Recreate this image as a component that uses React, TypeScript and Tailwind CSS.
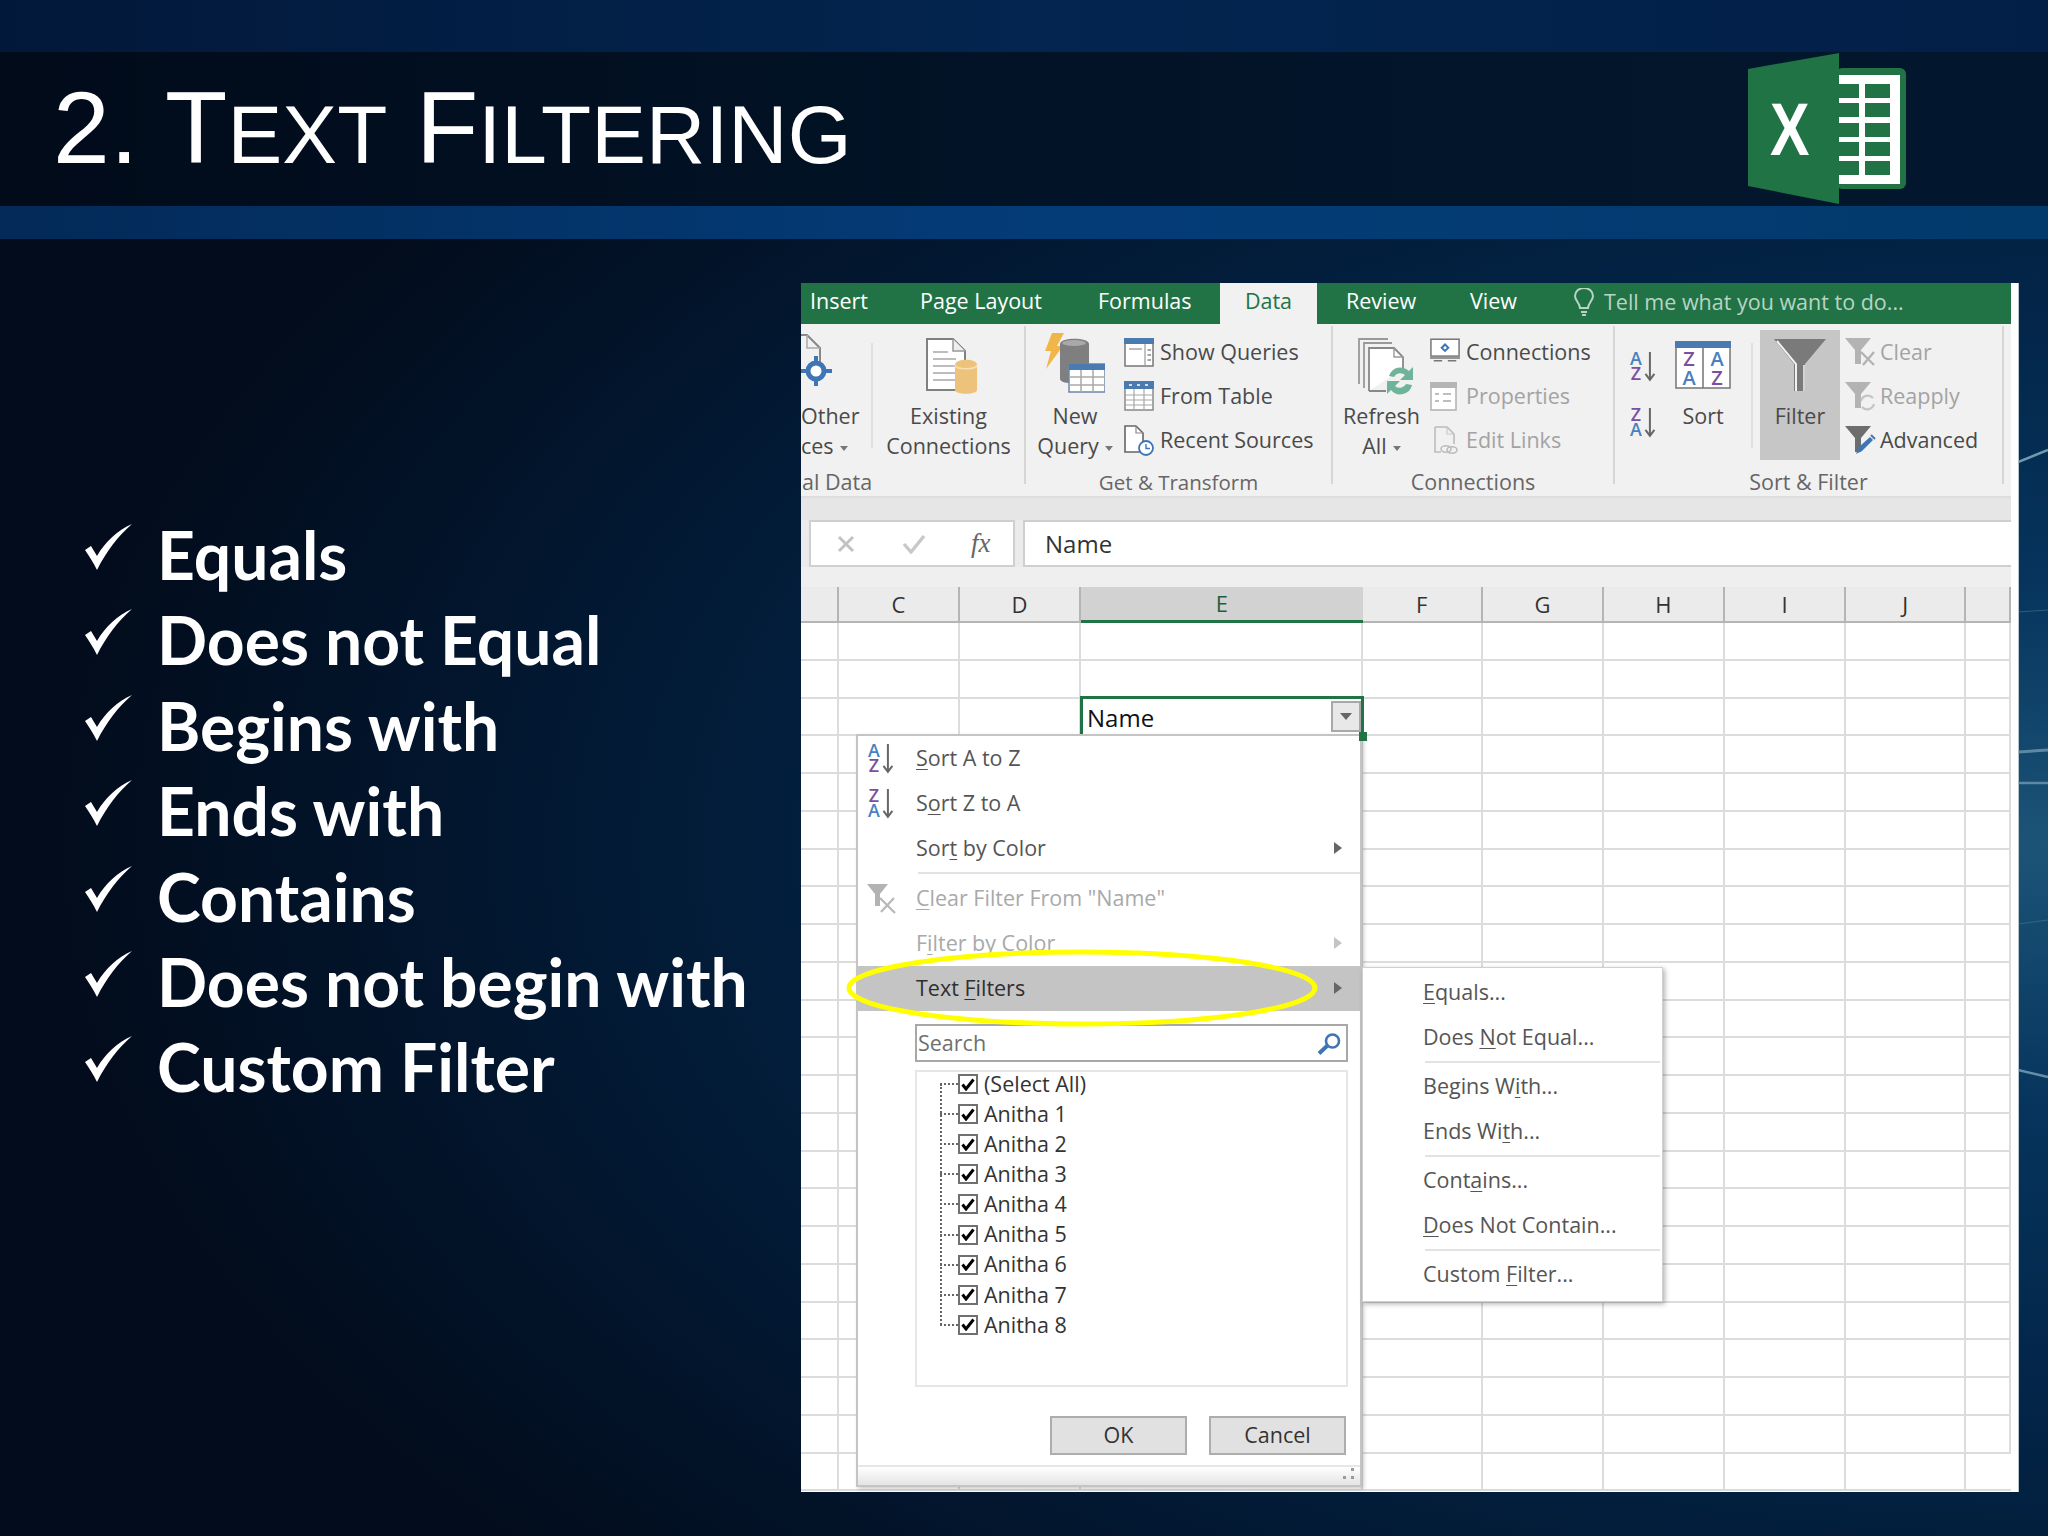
import type { ReactNode } from "react";

const ui = "font-['Open_Sans',sans-serif]";

const bullets = ["Equals", "Does not Equal", "Begins with", "Ends with", "Contains", "Does not begin with", "Custom Filter"];
const colLabels = ["", "C", "D", "E", "F", "G", "H", "I", "J", ""];
const tree = ["(Select All)", "Anitha 1", "Anitha 2", "Anitha 3", "Anitha 4", "Anitha 5", "Anitha 6", "Anitha 7", "Anitha 8"];
const gridCols = "grid grid-cols-[38px_121px_121px_281.6px_120.4px_121px_121px_121px_120.5px_44.5px]";

function Tick() {
  return (
    <svg width="47" height="46" viewBox="0 0 47 46" className="shrink-0">
      <path d="M0 26 L6 22 L12 32 C20 18 33 6 47 0 C33 12 21 28 12 46 C8 38 4 32 0 26Z" fill="#fff" />
    </svg>
  );
}

function ExcelLogo() {
  return (
    <svg width="160" height="152" viewBox="0 0 160 152">
      <rect x="88" y="15" width="70" height="121" rx="6" fill="#217346" />
      <rect x="90" y="22" width="62" height="109" fill="#fff" />
      <g fill="#217346">
        {[31, 50, 70, 89, 108].map((y) => (
          <g key={y}>
            <rect x="90" y={y} width="21" height="14" />
            <rect x="117" y={y} width="25" height="14" />
          </g>
        ))}
      </g>
      <path d="M0 16 L91 0 V151 L0 133Z" fill="#1f7345" />
      <text x="0" y="102" transform="translate(22 0) scale(0.8 1)" fontFamily="Liberation Sans" fontWeight="700" fontSize="74" fill="#fff">X</text>
    </svg>
  );
}

function SortAZ({ flip, size = 34 }: { flip?: boolean; size?: number }) {
  const top = flip ? ["Z", "#7a4fa3"] : ["A", "#4a7fc0"];
  const bottom = flip ? ["A", "#4a7fc0"] : ["Z", "#7a4fa3"];
  return (
    <svg width={size * 0.82} height={size} viewBox="0 0 28 34">
      <text x="7" y="15" textAnchor="middle" fontFamily="Open Sans" fontWeight="600" fontSize="18" fill={top[1]}>{top[0]}</text>
      <text x="7" y="30" textAnchor="middle" fontFamily="Open Sans" fontWeight="600" fontSize="18" fill={bottom[1]}>{bottom[0]}</text>
      <path d="M21 2 V29 M16.5 24 L21 30 L25.5 24" fill="none" stroke="#666" strokeWidth="2" />
    </svg>
  );
}

function OtherIcon() {
  return (
    <svg width="32" height="62" viewBox="0 0 32 62">
      <path d="M0 2 H6 L19 15 V30" fill="none" stroke="#888" strokeWidth="2" />
      <path d="M6 2 V15 H19" fill="none" stroke="#aaa" strokeWidth="1.5" />
      <circle cx="15" cy="38" r="8" fill="#fff" stroke="#3f75b5" strokeWidth="5" />
      <path d="M15 23 V30 M15 46 V53 M0 38 H7 M23 38 H31" stroke="#3f75b5" strokeWidth="4" />
    </svg>
  );
}

function ExistingIcon() {
  return (
    <svg width="52" height="56" viewBox="0 0 52 56" className="ml-[6px] mt-[5px]">
      <path d="M1 1 H27 L39 13 V52 H1Z" fill="#fff" stroke="#808080" strokeWidth="2" />
      <path d="M27 1 V13 H39" fill="#eee" stroke="#999" strokeWidth="1.5" />
      <path d="M7 14 H22 M7 21 H30 M7 28 H30 M7 35 H30 M7 42 H30" stroke="#bdbdbd" strokeWidth="1.8" />
      <path d="M29 27 C29 20 51 20 51 27 V52 C51 57 29 57 29 52Z" fill="#edc27a" />
      <path d="M29 27 C29 32 51 32 51 27" fill="none" stroke="#f7dfb3" strokeWidth="1.5" />
    </svg>
  );
}

function NewQueryIcon() {
  return (
    <svg width="60" height="60" viewBox="0 0 60 60">
      <path d="M7 0 H19 L12 13 H18 L1 36 L6 18 H0Z" fill="#f0b64a" />
      <path d="M15 11 C15 4 44 4 44 11 V46 C44 52 15 52 15 46Z" fill="#7f7f7f" />
      <ellipse cx="29" cy="10" rx="12" ry="3" fill="#a9a9a9" />
      <rect x="24" y="31" width="36" height="28" fill="#fff" stroke="#6c86a6" strokeWidth="1.5" />
      <rect x="24" y="31" width="36" height="6" fill="#4a7ab0" />
      <path d="M36 37 V59 M48 37 V59 M24 44 H60 M24 52 H60" stroke="#a9a9a9" strokeWidth="1.5" />
    </svg>
  );
}

function ShowQueriesIcon() {
  return (
    <svg width="30" height="29" viewBox="0 0 30 29">
      <rect x="1" y="1" width="28" height="27" fill="#fff" stroke="#777" strokeWidth="1.5" />
      <rect x="0" y="0" width="30" height="6" fill="#4a7ab0" />
      <path d="M21 6 V28" stroke="#999" strokeWidth="1.2" />
      <path d="M5 11 H18" stroke="#bbb" strokeWidth="2" />
      <path d="M23.5 12 H27 M23.5 17 H27 M23.5 22 H27" stroke="#888" strokeWidth="1.5" />
    </svg>
  );
}

function FromTableIcon() {
  return (
    <svg width="30" height="30" viewBox="0 0 30 30">
      <rect x="1" y="1" width="28" height="28" fill="#fff" stroke="#888" strokeWidth="1.5" />
      <rect x="0" y="0" width="30" height="8" fill="#4a7ab0" />
      <path d="M5 4 H8 M13 4 H16 M21 4 H24" stroke="#fff" strokeWidth="1.5" />
      <path d="M10 8 V29 M20 8 V29 M1 14 H29 M1 19 H29 M1 24 H29" stroke="#a8a8a8" strokeWidth="1.2" />
    </svg>
  );
}

function RecentIcon() {
  return (
    <svg width="31" height="31" viewBox="0 0 31 31">
      <path d="M1 1 H12 L19 8 V27 H1Z" fill="#fff" stroke="#666" strokeWidth="1.6" />
      <path d="M12 1 V8 H19" fill="none" stroke="#888" strokeWidth="1.2" />
      <circle cx="22" cy="23" r="7" fill="#fff" stroke="#3f75b5" strokeWidth="1.8" />
      <path d="M22 19 V23.5 H26" fill="none" stroke="#3f75b5" strokeWidth="1.4" />
    </svg>
  );
}

function RefreshIcon() {
  return (
    <svg width="56" height="57" viewBox="0 0 56 57" className="ml-[8px] mt-[5px]">
      <path d="M1 46 V1 H30" fill="none" stroke="#999" strokeWidth="1.8" />
      <path d="M6 50 V5 H34" fill="none" stroke="#999" strokeWidth="1.8" />
      <path d="M11 53 V10 H36 L45 19 V30 M11 53 H28" fill="#fff" stroke="#888" strokeWidth="1.8" />
      <path d="M36 10 V19 H45" fill="none" stroke="#999" strokeWidth="1.4" />
      <path d="M31 38 A12 12 0 0 1 51 33 L55 29 V42 H42 L47 37 A7 7 0 0 0 36 39Z M29 43 H42 L37 48 A7 7 0 0 0 48 46 L54 47 A12 12 0 0 1 33 52 L29 56Z" fill="#6fb39a" />
    </svg>
  );
}

function ConnectionsIcon() {
  return (
    <svg width="30" height="24" viewBox="0 0 32 25" className="-mt-[4px]">
      <rect x="1" y="1" width="30" height="18" fill="#fff" stroke="#777" strokeWidth="1.6" />
      <path d="M16 5 L21 10 L16 15 L11 10Z" fill="#3f75b5" />
      <circle cx="16" cy="10" r="1.6" fill="#fff" />
      <path d="M0 21 H32 M4 24 H13 M19 24 H28" stroke="#777" strokeWidth="1.6" />
    </svg>
  );
}

function PropertiesIcon() {
  return (
    <svg width="27" height="29" viewBox="0 0 27 29">
      <rect x="1" y="1" width="25" height="27" fill="#fff" stroke="#b5b5b5" strokeWidth="1.6" />
      <rect x="0" y="0" width="27" height="6" fill="#b5b5b5" />
      <path d="M5 12 H9 M5 19 H9 M13 12 H21 M13 19 H21" stroke="#a9a9a9" strokeWidth="1.6" />
    </svg>
  );
}

function EditLinksIcon() {
  return (
    <svg width="24" height="29" viewBox="0 0 24 29" className="ml-[4px]">
      <path d="M1 1 H13 L20 8 V18 M1 1 V26 H7" fill="none" stroke="#bcbcbc" strokeWidth="1.6" />
      <path d="M13 1 V8 H20" fill="none" stroke="#c8c8c8" strokeWidth="1.2" />
      <ellipse cx="12" cy="23" rx="5" ry="3.2" fill="none" stroke="#bcbcbc" strokeWidth="1.6" />
      <ellipse cx="18" cy="24" rx="5" ry="3.2" fill="none" stroke="#bcbcbc" strokeWidth="1.6" />
    </svg>
  );
}

function SortIcon() {
  return (
    <svg width="56" height="48" viewBox="0 0 56 48" className="mt-[8px]">
      <rect x="1" y="1" width="54" height="46" fill="#fff" stroke="#7c7c7c" strokeWidth="1.6" />
      <rect x="0" y="0" width="56" height="7" fill="#4a7ab0" />
      <path d="M28 7 V47" stroke="#7c7c7c" strokeWidth="1.6" />
      <g fontFamily="Open Sans" fontWeight="600" fontSize="20" textAnchor="middle">
        <text x="14" y="25" fill="#7a4fa3">Z</text>
        <text x="14" y="44" fill="#4a7fc0">A</text>
        <text x="42" y="25" fill="#4a7fc0">A</text>
        <text x="42" y="44" fill="#7a4fa3">Z</text>
      </g>
    </svg>
  );
}

function BigFunnel() {
  return (
    <svg width="52" height="52" viewBox="0 0 52 52">
      <path d="M0 0 H52 L31 25 V52 H20 V25Z" fill="#7a7a7a" />
      <path d="M3 2 L22 25 V52" fill="none" stroke="#f2f2f2" strokeWidth="2" />
      <path d="M30 26 V52" stroke="#f2f2f2" strokeWidth="1.5" />
    </svg>
  );
}

function SmallFunnel({ color, children }: { color: string; children?: ReactNode }) {
  return (
    <svg width="34" height="30" viewBox="0 0 34 30">
      <path d="M1 1 H27 L17 13 V27 H11 V13Z" fill={color} />
      {children}
    </svg>
  );
}

function ClearIcon() {
  return (
    <SmallFunnel color="#b3b3b3">
      <path d="M17 15 L30 28 M30 15 L19 28" stroke="#b3b3b3" strokeWidth="2.4" />
    </SmallFunnel>
  );
}

function ReapplyIcon() {
  return (
    <SmallFunnel color="#b3b3b3">
      <path d="M17 20 A7 7 0 0 1 29 17 M30 23 A7 7 0 0 1 18 26" fill="none" stroke="#c4c4c4" strokeWidth="2.2" />
    </SmallFunnel>
  );
}

function AdvancedIcon() {
  return (
    <SmallFunnel color="#6d6d6d">
      <path d="M12 29 L15 22 L26 12 L29 15 L18 26Z" fill="#3f75b5" />
      <path d="M27 10 L31 14" stroke="#3f75b5" strokeWidth="2" />
    </SmallFunnel>
  );
}

function ClearMenuIcon() {
  return (
    <svg width="30" height="30" viewBox="0 0 30 30">
      <path d="M0 0 H21 L13 10 V22 H8 V10Z" fill="#b3b3b3" />
      <path d="M13 14 L28 29 M27 14 L14 28" stroke="#b8b8b8" strokeWidth="2.2" />
    </svg>
  );
}

function Separator({ short }: { short?: boolean }) {
  return <div className={short ? "w-[2px] h-[105px] mt-[13px] bg-[#e0e0e0] shrink-0" : "w-[2px] h-[158px] mt-[2px] bg-[#d6d6d6] shrink-0"} />;
}

function BigButton({ icon, lines, width }: { icon: ReactNode; lines: ReactNode[]; width: string }) {
  return (
    <div className={`${width} flex flex-col items-center shrink-0`}>
      <div className="h-[71px] pt-[3px] flex items-start justify-center">{icon}</div>
      {lines.map((l, i) => (
        <div key={i} className="leading-[30px] whitespace-nowrap">{l}</div>
      ))}
    </div>
  );
}

function SmallRow({ icon, label, muted }: { icon: ReactNode; label: string; muted?: boolean }) {
  return (
    <div className={muted ? "h-[44px] flex items-center text-[#a3a3a3]" : "h-[44px] flex items-center"}>
      <div className="w-[36px] shrink-0">{icon}</div>
      <span className="whitespace-nowrap">{label}</span>
    </div>
  );
}

function Caret() {
  return <span className="inline-block ml-[6px] align-middle border-x-[4px] border-t-[5px] border-x-transparent border-t-[#777]" />;
}

function Group({ width, label, labelClass, children }: { width: string; label: string; labelClass?: string; children: ReactNode }) {
  return (
    <div className={`${width} flex flex-col shrink-0`}>
      <div className="h-[144px] pt-[6px] flex">{children}</div>
      <div className={`h-[30px] leading-[32px] text-[#666] text-center whitespace-nowrap ${labelClass ?? ""}`}>{label}</div>
    </div>
  );
}

function Ribbon() {
  return (
    <div className="flex h-[174px] bg-[#f1f1f1] border-b-2 border-[#dedede] text-[#4a4a4a] text-[21.5px]">
      <Group width="w-[223px]" label="al Data" labelClass="text-left! pl-[1px]">
        <div className="w-[70px] shrink-0 overflow-hidden">
          <div className="h-[71px] pt-[3px]">
            <OtherIcon />
          </div>
          <div className="leading-[30px]">Other</div>
          <div className="leading-[30px]">ces<Caret /></div>
        </div>
        <Separator short />
        <BigButton width="w-[151px]" icon={<ExistingIcon />} lines={["Existing", "Connections"]} />
      </Group>
      <Separator />
      <Group width="w-[305px]" label="Get & Transform" labelClass="text-[20.5px]">
        <BigButton width="w-[98px]" icon={<NewQueryIcon />} lines={["New", <>Query<Caret /></>]} />
        <div>
          <SmallRow icon={<ShowQueriesIcon />} label="Show Queries" />
          <SmallRow icon={<FromTableIcon />} label="From Table" />
          <SmallRow icon={<RecentIcon />} label="Recent Sources" />
        </div>
      </Group>
      <Separator />
      <Group width="w-[280px]" label="Connections">
        <BigButton width="w-[97px]" icon={<RefreshIcon />} lines={["Refresh", <>All<Caret /></>]} />
        <div>
          <SmallRow icon={<ConnectionsIcon />} label="Connections" />
          <SmallRow icon={<PropertiesIcon />} label="Properties" muted />
          <SmallRow icon={<EditLinksIcon />} label="Edit Links" muted />
        </div>
      </Group>
      <Separator />
      <Group width="w-[387px]" label="Sort & Filter">
        <div className="w-[60px] pl-[14px] pt-[20px] shrink-0 flex flex-col gap-[22px]">
          <SortAZ />
          <SortAZ flip />
        </div>
        <BigButton width="w-[56px]" icon={<SortIcon />} lines={["Sort"]} />
        <div className="w-[20px] shrink-0" />
        <Separator short />
        <div className="ml-[7px] w-[80px] h-[130px] bg-[#c6c6c6] flex flex-col items-center shrink-0">
          <div className="h-[71px] pt-[9px]">
            <BigFunnel />
          </div>
          <div className="leading-[30px]">Filter</div>
        </div>
        <div className="ml-[4px]">
          <SmallRow icon={<ClearIcon />} label="Clear" muted />
          <SmallRow icon={<ReapplyIcon />} label="Reapply" muted />
          <SmallRow icon={<AdvancedIcon />} label="Advanced" />
        </div>
      </Group>
      <Separator />
    </div>
  );
}

function Tabs() {
  return (
    <div className="flex h-[41px] bg-[#217346] text-white text-[21.5px] leading-[36px] whitespace-nowrap">
      <div className="w-[119px] pl-[9px]">Insert</div>
      <div className="w-[178px]">Page Layout</div>
      <div className="w-[122px]">Formulas</div>
      <div className="w-[97px] bg-[#f1f1f1] text-[#217346] text-center">Data</div>
      <div className="w-[153px] pl-[29px]">Review</div>
      <div className="w-[104px]">View</div>
      <div className="flex items-center gap-[10px] text-[#b9d4c4] h-[37px]">
        <svg width="20" height="28" viewBox="0 0 20 28" fill="none" stroke="#b9d4c4" strokeWidth="2">
          <path d="M6 20 C6 15 1 13 1 8 A9 8 0 0 1 19 8 C19 13 14 15 14 20Z" />
          <path d="M7 24 H13 M8 27 H12" />
        </svg>
        Tell me what you want to do...
      </div>
    </div>
  );
}

function FormulaBar() {
  return (
    <div className="h-[89px] bg-[#ebebeb]">
      <div className="h-[22px] bg-[#e6e6e6]" />
      <div className="h-[47px] flex pl-[8px]">
        <div className="w-[206px] bg-white border-2 border-[#cfcfcf] flex items-center">
          <span className="w-[70px] flex justify-center">
            <svg width="18" height="18" viewBox="0 0 18 18"><path d="M2 2 L16 16 M16 2 L2 16" stroke="#c2c2c2" strokeWidth="3" /></svg>
          </span>
          <span className="w-[66px] flex justify-center">
            <svg width="24" height="20" viewBox="0 0 24 20"><path d="M2 10 L9 18 L22 2" fill="none" stroke="#c8c8c8" strokeWidth="3.4" /></svg>
          </span>
          <span className="ml-[24px] font-['Liberation_Serif',serif] italic text-[#666] text-[27px] leading-none">fx</span>
        </div>
        <div className="flex-1 ml-[8px] bg-white border-y-2 border-l-2 border-[#cfcfcf] pl-[20px] flex items-center text-[24px] text-[#333]">Name</div>
      </div>
      <div className="h-[20px] bg-[#efefef]" />
    </div>
  );
}

function Sheet() {
  const rows = Array.from({ length: 23 });
  return (
    <div className="flex-1 overflow-hidden">
      <div className={`${gridCols} h-[36px] bg-[#ebebeb] text-[22px] text-[#333]`}>
        {colLabels.map((c, i) => (
          <div
            key={i}
            className={
              c === "E"
                ? "bg-[#d2d2d2] border-b-[3px] border-[#217346] text-[#1c5f3a] flex items-center justify-center"
                : "border-r-2 border-b-2 border-[#b5b5b5] flex items-center justify-center"
            }
          >
            {c}
          </div>
        ))}
      </div>
      <div className={`${gridCols} auto-rows-[37.75px]`}>
        {rows.map((_, r) =>
          colLabels.map((_c, c) => (
            <div key={`${r}-${c}`} className="border-r-2 border-b-2 border-[#dcdcdc] last:border-r-0 relative">
              {r === 2 && c === 3 && (
                <div className="absolute -left-px -top-[3px] w-[284px] h-[41px] bg-white border-[3px] border-[#217346] z-10 flex items-center pl-[4px] pt-[3px] text-[24px] text-[#111]">
                  Name
                  <div className="absolute right-0 top-[2px] w-[30px] h-[31px] bg-[#e8e8e8] border-2 border-[#a8a8a8] flex items-center justify-center">
                    <span className="border-x-[6px] border-t-[7px] border-x-transparent border-t-[#666]" />
                  </div>
                </div>
              )}
            </div>
          ))
        )}
      </div>
    </div>
  );
}

function U({ children }: { children: ReactNode }) {
  return <span className="underline decoration-1 underline-offset-[3px]">{children}</span>;
}

function Arrow({ light }: { light?: boolean }) {
  return <span className={light ? "absolute right-[18px] top-[16px] border-y-[6px] border-l-[8px] border-y-transparent border-l-[#c4c4c4]" : "absolute right-[18px] top-[16px] border-y-[6px] border-l-[8px] border-y-transparent border-l-[#666]"} />;
}

function MenuRow({ icon, children, muted, active, arrow }: { icon?: ReactNode; children: ReactNode; muted?: boolean; active?: boolean; arrow?: boolean }) {
  const tone = muted ? "text-[#a9a9a9]" : active ? "text-[#2f2f2f] bg-[#c4c4c4]" : "text-[#555]";
  return (
    <div className={`relative h-[45px] flex items-center ${tone}`}>
      <div className="w-[58px] pl-[9px] shrink-0">{icon}</div>
      <span className="whitespace-nowrap">{children}</span>
      {arrow && <Arrow light={muted} />}
    </div>
  );
}

function FilterMenu() {
  return (
    <div className="absolute left-[55px] top-[451px] z-20 w-[506px] h-[753px] bg-white border-2 border-[#c4c4c4] shadow-[2px_2px_4px_rgba(0,0,0,0.2)] text-[21.5px] flex flex-col">
      <MenuRow icon={<SortAZ />}><U>S</U>ort A to Z</MenuRow>
      <MenuRow icon={<SortAZ flip />}>S<U>o</U>rt Z to A</MenuRow>
      <MenuRow arrow>Sor<U>t</U> by Color</MenuRow>
      <div className="ml-[60px] h-[2px] bg-[#e2e2e2] mt-[1px]" />
      <div className="h-[2px]" />
      <MenuRow muted icon={<ClearMenuIcon />}><U>C</U>lear Filter From "Name"</MenuRow>
      <MenuRow muted arrow>F<U>i</U>lter by Color</MenuRow>
      <MenuRow active arrow>Text <U>F</U>ilters</MenuRow>
      <div className="ml-[57px] mr-[12px] mt-[13px] h-[38px] border-2 border-[#a8a8a8] flex items-center justify-between pl-[1px] pr-[4px] text-[#6f6f6f]">
        Search
        <svg width="25" height="23" viewBox="0 0 25 23" fill="none" stroke="#3f75b5">
          <circle cx="15.5" cy="9" r="6.5" strokeWidth="2.6" />
          <path d="M10.5 13.5 L2 21.5" strokeWidth="4" />
        </svg>
      </div>
      <div className="relative ml-[57px] mr-[12px] mt-[8px] h-[317px] border-2 border-[#e6e6e6] pl-[23px] text-[#333]">
        <div className="absolute left-[23px] top-[12px] h-[241px] border-l-2 border-dotted border-[#666]" />
        <div className="-mt-[3px]">
          {tree.map((t) => (
            <div key={t} className="h-[30.1px] flex items-center">
              <span className="w-[18px] border-t-2 border-dotted border-[#666] shrink-0" />
              <span className="w-[20px] h-[20px] border-2 border-[#707070] flex items-center justify-center mr-[6px] shrink-0">
                <svg width="14" height="13" viewBox="0 0 14 13"><path d="M1.5 6.5 L5 11 L12.5 1.5" fill="none" stroke="#000" strokeWidth="3" /></svg>
              </span>
              {t}
            </div>
          ))}
        </div>
      </div>
      <div className="mt-[29px] ml-[192px] flex gap-[22px] text-[#333]">
        <div className="w-[137px] h-[39px] bg-[#e1e1e1] border-2 border-[#adadad] flex items-center justify-center">OK</div>
        <div className="w-[137px] h-[39px] bg-[#e1e1e1] border-2 border-[#adadad] flex items-center justify-center">Cancel</div>
      </div>
      <div className="relative mt-[10px] flex-1 border-t-2 border-[#e6e6e6] bg-gradient-to-b from-white to-[#e4e4e4]">
        <svg className="absolute right-[4px] bottom-[4px]" width="14" height="14" viewBox="0 0 14 14" fill="#9a9a9a">
          <rect x="9" y="1" width="3" height="3" />
          <rect x="1" y="9" width="3" height="3" />
          <rect x="9" y="9" width="3" height="3" />
        </svg>
      </div>
    </div>
  );
}

function SubMenuRow({ children }: { children: ReactNode }) {
  return (
    <div className="h-[45px] pl-[60px] flex items-center">
      <span className="whitespace-nowrap">{children}</span>
    </div>
  );
}

function SubMenu() {
  const divider = <div className="ml-[62px] mr-[2px] h-[2px] bg-[#e2e2e2] my-[1px]" />;
  return (
    <div className="absolute left-[561px] top-[684px] z-30 w-[301px] h-[335px] pt-[2px] bg-white border border-[#d0d0d0] shadow-[2px_2px_5px_rgba(0,0,0,0.3)] text-[21.5px] text-[#555]">
      <SubMenuRow><U>E</U>quals...</SubMenuRow>
      <SubMenuRow>Does <U>N</U>ot Equal...</SubMenuRow>
      {divider}
      <SubMenuRow>Begins W<U>i</U>th...</SubMenuRow>
      <SubMenuRow>Ends Wi<U>t</U>h...</SubMenuRow>
      {divider}
      <SubMenuRow>Cont<U>a</U>ins...</SubMenuRow>
      <SubMenuRow><U>D</U>oes Not Contain...</SubMenuRow>
      {divider}
      <SubMenuRow>Custom <U>F</U>ilter...</SubMenuRow>
    </div>
  );
}

export default function App() {
  return (
    <div className="relative w-[2048px] h-[1536px] overflow-hidden flex flex-col bg-[radial-gradient(ellipse_2000px_1100px_at_100%_55%,#1c5478_0%,#06345c_24%,#03264a_48%,#021a35_72%,#020c1c_100%)]">
      <div className="h-[52px] bg-gradient-to-r from-[#02183a] via-[#03254f] to-[#021f48]" />
      <div className="h-[154px] flex items-center justify-between pl-[53px] pr-[140px] bg-gradient-to-r from-[#010b1a] via-[#021327] to-[#02172e]">
        <div className="font-['Liberation_Sans',sans-serif] text-[102px] tracking-[0.15px] leading-none text-white whitespace-nowrap -mt-[2px]">
          2. T<span className="text-[82px] uppercase">ext</span> F<span className="text-[82px] uppercase">iltering</span>
        </div>
        <ExcelLogo />
      </div>
      <div className="h-[33px] bg-gradient-to-r from-[#032a58] via-[#043c78] to-[#033a6c]" />
      <div className="flex-1 flex">
        <div className="w-[801px] shrink-0 pl-[85px] pt-[273px] font-['Lato',sans-serif] font-bold text-[66px] text-white">
          {bullets.map((b) => (
            <div key={b} className="h-[85.4px] leading-[85.4px] flex whitespace-nowrap">
              <div className="w-[72px] pt-[12px]">
                <Tick />
              </div>
              {b}
            </div>
          ))}
        </div>
        <div className={`relative mt-[44px] w-[1218px] h-[1209px] bg-white pr-[7px] border-r border-[#b8c4cc] flex flex-col text-[#333] ${ui}`}>
          <Tabs />
          <Ribbon />
          <FormulaBar />
          <Sheet />
          <FilterMenu />
          <SubMenu />
          <div className="absolute left-[558px] top-[449px] z-30 w-[8px] h-[9px] bg-[#217346]" />
          <svg className="absolute left-[44px] top-[665px] z-40" width="474" height="80" viewBox="0 0 474 80">
            <ellipse cx="237" cy="40" rx="233" ry="36" fill="none" stroke="#ffff00" strokeWidth="5" />
          </svg>
        </div>
      </div>
      <svg className="absolute right-0 top-[440px]" width="30" height="660" viewBox="0 0 30 660" fill="none" stroke="#8fb3c8">
        <path d="M0 22 L30 10" strokeWidth="2.5" opacity="0.8" />
        <path d="M0 172 L30 170" strokeWidth="1" opacity="0.3" />
        <path d="M0 312 L30 310" strokeWidth="3" opacity="0.6" />
        <path d="M0 343 L30 343" strokeWidth="2.5" opacity="0.6" />
        <path d="M0 484 L30 480" strokeWidth="1" opacity="0.25" />
        <path d="M0 630 L30 637" strokeWidth="2.5" opacity="0.7" />
      </svg>
    </div>
  );
}
